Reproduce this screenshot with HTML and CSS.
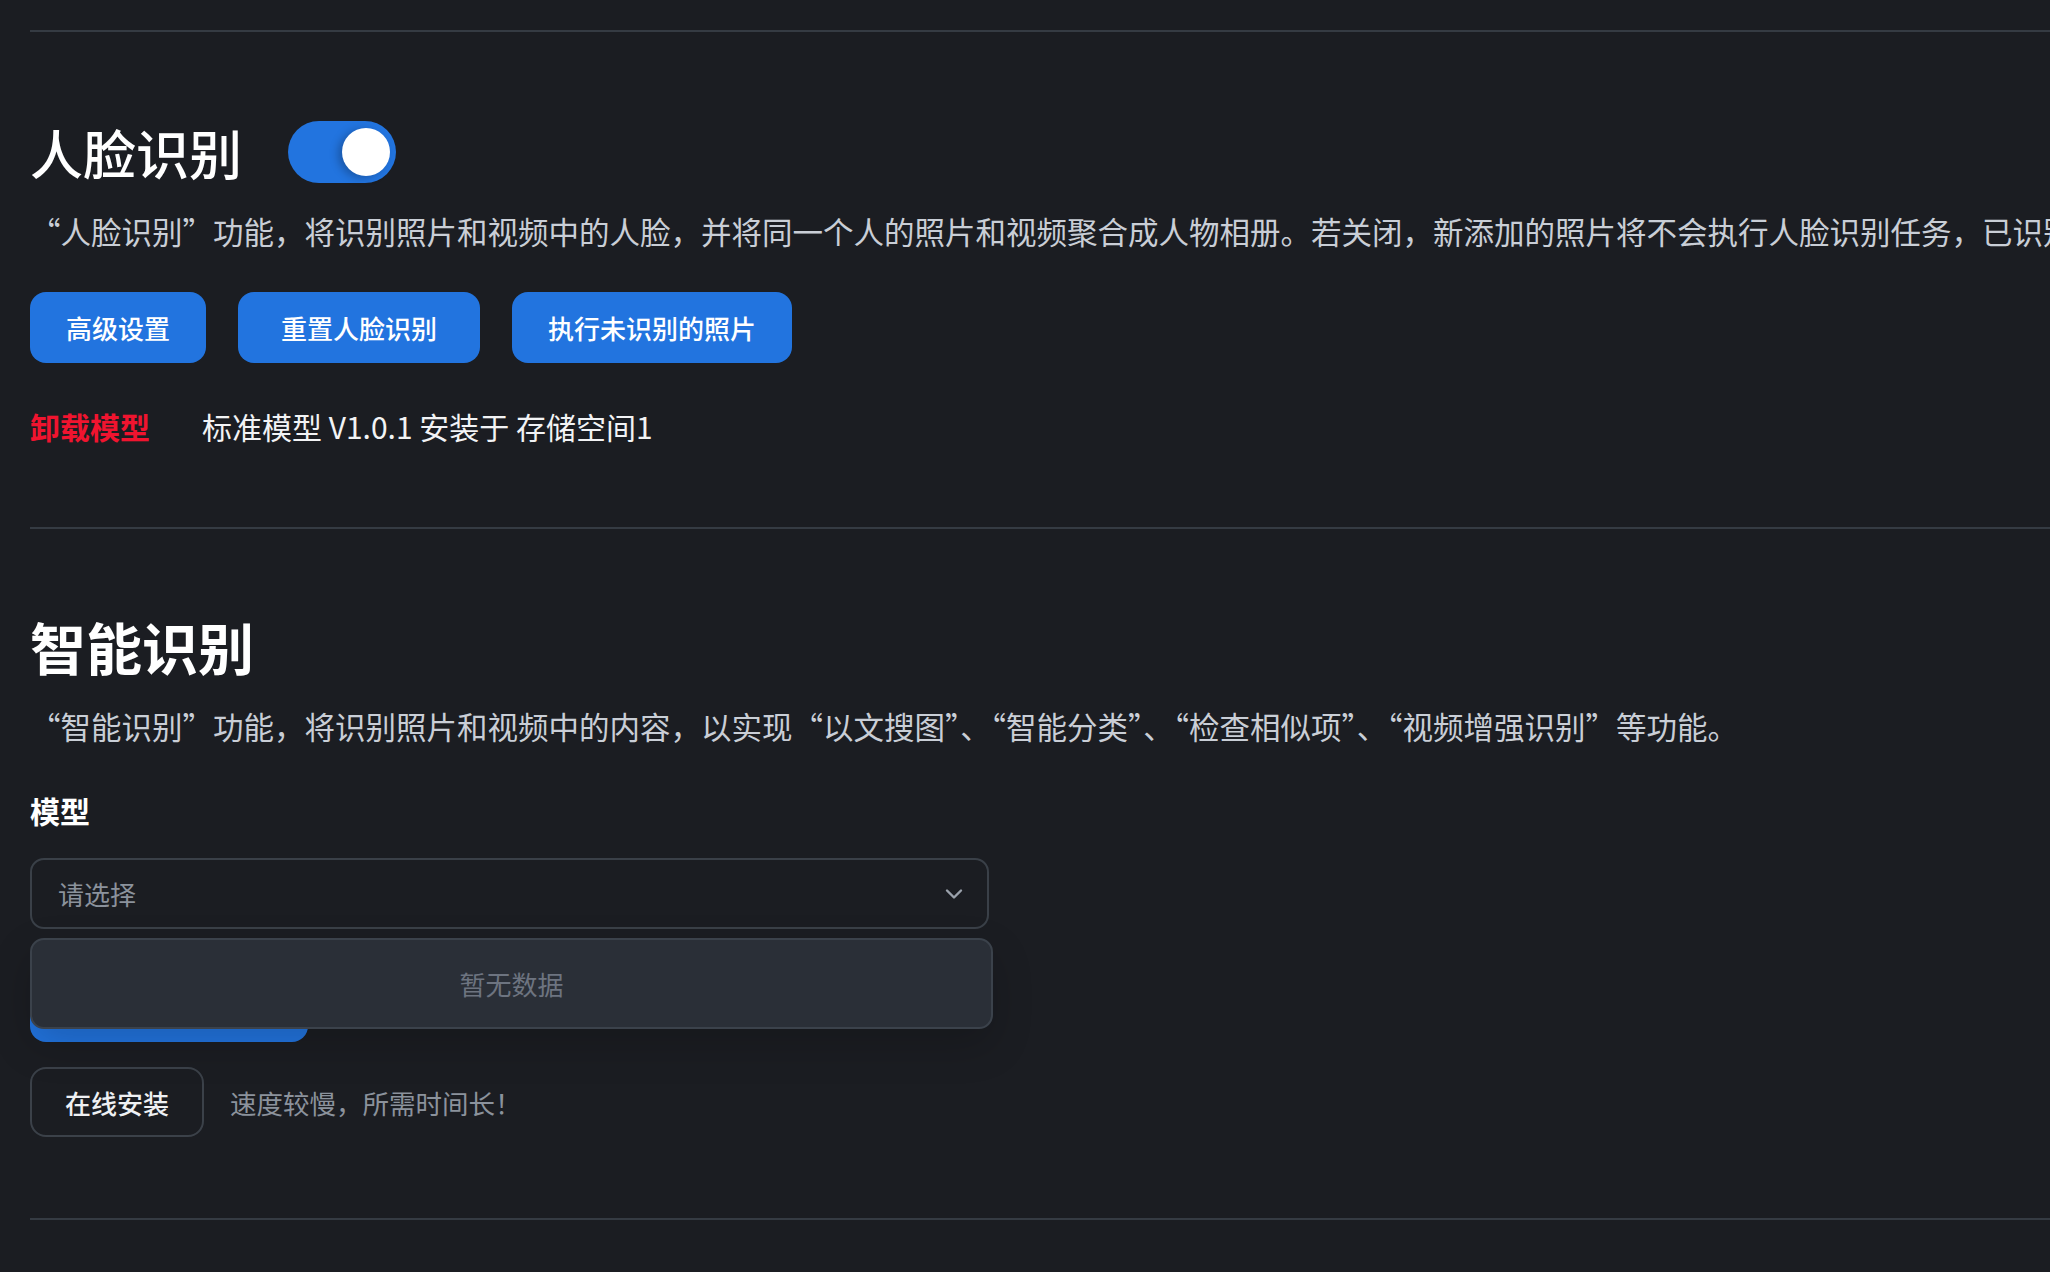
FILE: index.html
```
<!DOCTYPE html>
<html lang="zh-CN">
<head>
    <meta charset="UTF-8">
    <meta name="viewport" content="width=device-width, initial-scale=1.0">
    <title>识别设置</title>
    <link rel="stylesheet" href="styles.css">
</head>
<body>
    <div class="page">
        <hr class="divider">

        <section class="section face">
            <div class="section-head">
                <h2 class="title">人脸识别</h2>
                <span class="switch is-on"><span class="knob"></span></span>
            </div>
            <p class="desc">“人脸识别”功能，将识别照片和视频中的人脸，并将同一个人的照片和视频聚合成人物相册。若关闭，新添加的照片将不会执行人脸识别任务，已识别的人物</p>
            <div class="btn-row">
                <button class="btn btn-primary">高级设置</button>
                <button class="btn btn-primary btn-wide">重置人脸识别</button>
                <button class="btn btn-primary">执行未识别的照片</button>
            </div>
            <div class="model-line">
                <a class="danger-link">卸载模型</a>
                <span class="model-info">标准模型 V1.0.1 安装于 存储空间1</span>
            </div>
        </section>

        <hr class="divider">

        <section class="section smart">
            <h2 class="title title-bold">智能识别</h2>
            <p class="desc">“智能识别”功能，将识别照片和视频中的内容，以实现“以文搜图”、“智能分类”、“检查相似项”、“视频增强识别”等功能。</p>
            <label class="field-label">模型</label>
            <div class="select-wrap">
                <div class="select">
                    <span class="placeholder">请选择</span>
                    <svg class="chevron" width="18" height="12" viewBox="0 0 18 12">
                        <path d="M2 2.5 L9 9.5 L16 2.5" fill="none" stroke="currentColor" stroke-width="2.4" stroke-linecap="round" stroke-linejoin="round"/>
                    </svg>
                </div>
                <div class="dropdown">暂无数据</div>
            </div>
            <button class="btn btn-primary btn-local">本地安装</button>
            <div class="install-row">
                <button class="btn btn-outline">在线安装</button>
                <span class="hint">速度较慢，所需时间长！</span>
            </div>
        </section>

        <hr class="divider">
    </div>
</body>
</html>
```

FILE: styles.css
```
html, body {
    margin: 0;
    padding: 0;
    background: #1b1d22;
    overflow: hidden;
}
body {
    font-family: "Noto Sans CJK SC", "Noto Sans", sans-serif;
    color: #f2f3f5;
}
.page {
    padding: 30px 0 0 30px;
}
.divider {
    margin: 0;
    border: none;
    height: 2px;
    background: #353b43;
}
.section {
    display: flex;
    flex-direction: column;
    align-items: flex-start;
}
.face {
    padding: 89px 0 79px;
}
.smart {
    padding: 81px 0 81px;
}
.section-head {
    display: flex;
    align-items: center;
    gap: 46px;
}
.title {
    margin: 0;
    font-size: 53px;
    line-height: 62px;
    font-weight: 500;
    color: #ffffff;
}
.title-bold {
    font-size: 56px;
    line-height: 72px;
    font-weight: 700;
}
.switch {
    position: relative;
    display: inline-block;
    width: 108px;
    height: 62px;
    border-radius: 31px;
    background: #2274df;
}
.knob {
    position: absolute;
    top: 7px;
    right: 6px;
    width: 48px;
    height: 48px;
    border-radius: 50%;
    background: #ffffff;
    box-shadow: -4px 2px 8px rgba(0, 0, 0, 0.25);
}
.desc {
    margin: 26px 0 0;
    font-size: 30.5px;
    line-height: 44px;
    color: #c9ced6;
    white-space: nowrap;
}
.smart .desc {
    margin-top: 22px;
}
.btn-row {
    display: flex;
    gap: 32px;
    margin-top: 39px;
}
.btn {
    height: 71px;
    padding: 0 36px;
    border-radius: 16px;
    font-family: inherit;
    font-size: 26px;
    font-weight: 500;
    cursor: pointer;
}
.btn-primary {
    border: none;
    background: #2274df;
    color: #ffffff;
}
.btn-wide {
    padding: 0 43px;
}
.btn-outline {
    border: 2px solid #3b4149;
    background: transparent;
    color: #eef0f3;
    padding: 0 33px;
    height: 70px;
}
.model-line {
    display: flex;
    align-items: center;
    gap: 52px;
    margin-top: 41px;
    font-size: 30px;
    line-height: 44px;
}
.danger-link {
    color: #f0142f;
    font-weight: 700;
    cursor: pointer;
}
.model-info {
    color: #f2f3f5;
}
.field-label {
    margin-top: 42px;
    font-size: 30px;
    line-height: 40px;
    font-weight: 700;
    color: #ffffff;
}
.select-wrap {
    position: relative;
    margin-top: 28px;
}
.select {
    box-sizing: border-box;
    width: 959px;
    height: 71px;
    padding: 0 24px 0 26px;
    border: 2px solid #3a4048;
    border-radius: 14px;
    display: flex;
    align-items: center;
    justify-content: space-between;
}
.placeholder {
    font-size: 26px;
    color: #8b929c;
}
.chevron {
    color: #9aa1ab;
}
.dropdown {
    position: absolute;
    top: 80px;
    left: 0;
    z-index: 2;
    box-sizing: border-box;
    width: 963px;
    height: 91px;
    border: 2px solid #3b424b;
    border-radius: 14px;
    background: #2a2f37;
    display: flex;
    align-items: center;
    justify-content: center;
    font-size: 26px;
    color: #6d7480;
    box-shadow: 0 16px 40px rgba(0, 0, 0, 0.18);
}
.btn-local {
    width: 278px;
    margin-top: 42px;
}
.install-row {
    display: flex;
    align-items: center;
    gap: 26px;
    margin-top: 25px;
}
.hint {
    font-size: 26.5px;
    color: #8b929c;
}
```
